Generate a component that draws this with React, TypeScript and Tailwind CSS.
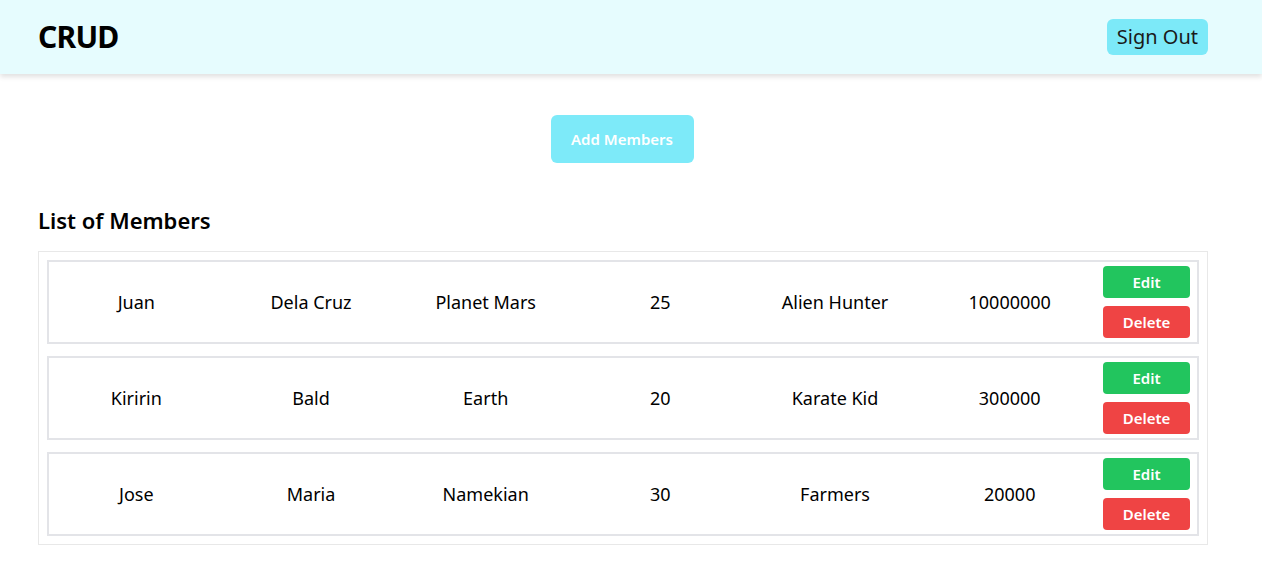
const MEMBERS = [
  { id: 1, first: 'Juan', last: 'Dela Cruz', address: 'Planet Mars', age: 25, job: 'Alien Hunter', salary: '10000000' },
  { id: 2, first: 'Kiririn', last: 'Bald', address: 'Earth', age: 20, job: 'Karate Kid', salary: '300000' },
  { id: 3, first: 'Jose', last: 'Maria', address: 'Namekian', age: 30, job: 'Farmers', salary: '20000' },
];

export default function App() {
  return (
    <div className="min-h-screen bg-white text-black font-['Noto_Sans','Open_Sans',sans-serif]">
      {/* Header */}
      <header className="h-[74px] bg-[#e6fcfe] shadow-[0_3px_5px_rgba(0,0,0,0.12)] flex items-center justify-between pl-[38px] pr-[54px]">
        <h1 className="text-[30px] font-bold leading-none tracking-tight">CRUD</h1>
        <button className="h-9 px-[10px] rounded-md bg-[#7ce9f8] text-[20px] text-[#1a1a1a] leading-none">Sign Out</button>
      </header>

      <main className="px-[38px] w-[1208px] box-content">
        <div className="w-[1168px] flex justify-center pt-[41px]">
          <button className="w-[143px] h-12 rounded-md bg-[#7deaf9] text-white font-semibold text-[15px]">Add Members</button>
        </div>

        <h2 className="mt-[46px] text-[22px] font-semibold leading-none">List of Members</h2>

        <div className="mt-[20px] w-[1170px] border border-[#e8e8e8] px-2 py-2 flex flex-col gap-3">
          {MEMBERS.map((m) => (
            <div key={m.id} className="h-[84px] border-2 border-[#e3e4e8] flex items-center pr-[7px] text-[18px]">
              <div className="flex-1 text-center">{m.first}</div>
              <div className="flex-1 text-center">{m.last}</div>
              <div className="flex-1 text-center">{m.address}</div>
              <div className="flex-1 text-center">{m.age}</div>
              <div className="flex-1 text-center">{m.job}</div>
              <div className="flex-1 text-center">{m.salary}</div>
              <div className="ml-[6px] w-[87px] flex flex-col gap-2">
                <button className="h-8 rounded-sm bg-[#22c55e] text-white font-semibold text-[15px]">Edit</button>
                <button className="h-8 rounded-sm bg-[#ef4444] text-white font-semibold text-[15px]">Delete</button>
              </div>
            </div>
          ))}
        </div>
      </main>
    </div>
  );
}
